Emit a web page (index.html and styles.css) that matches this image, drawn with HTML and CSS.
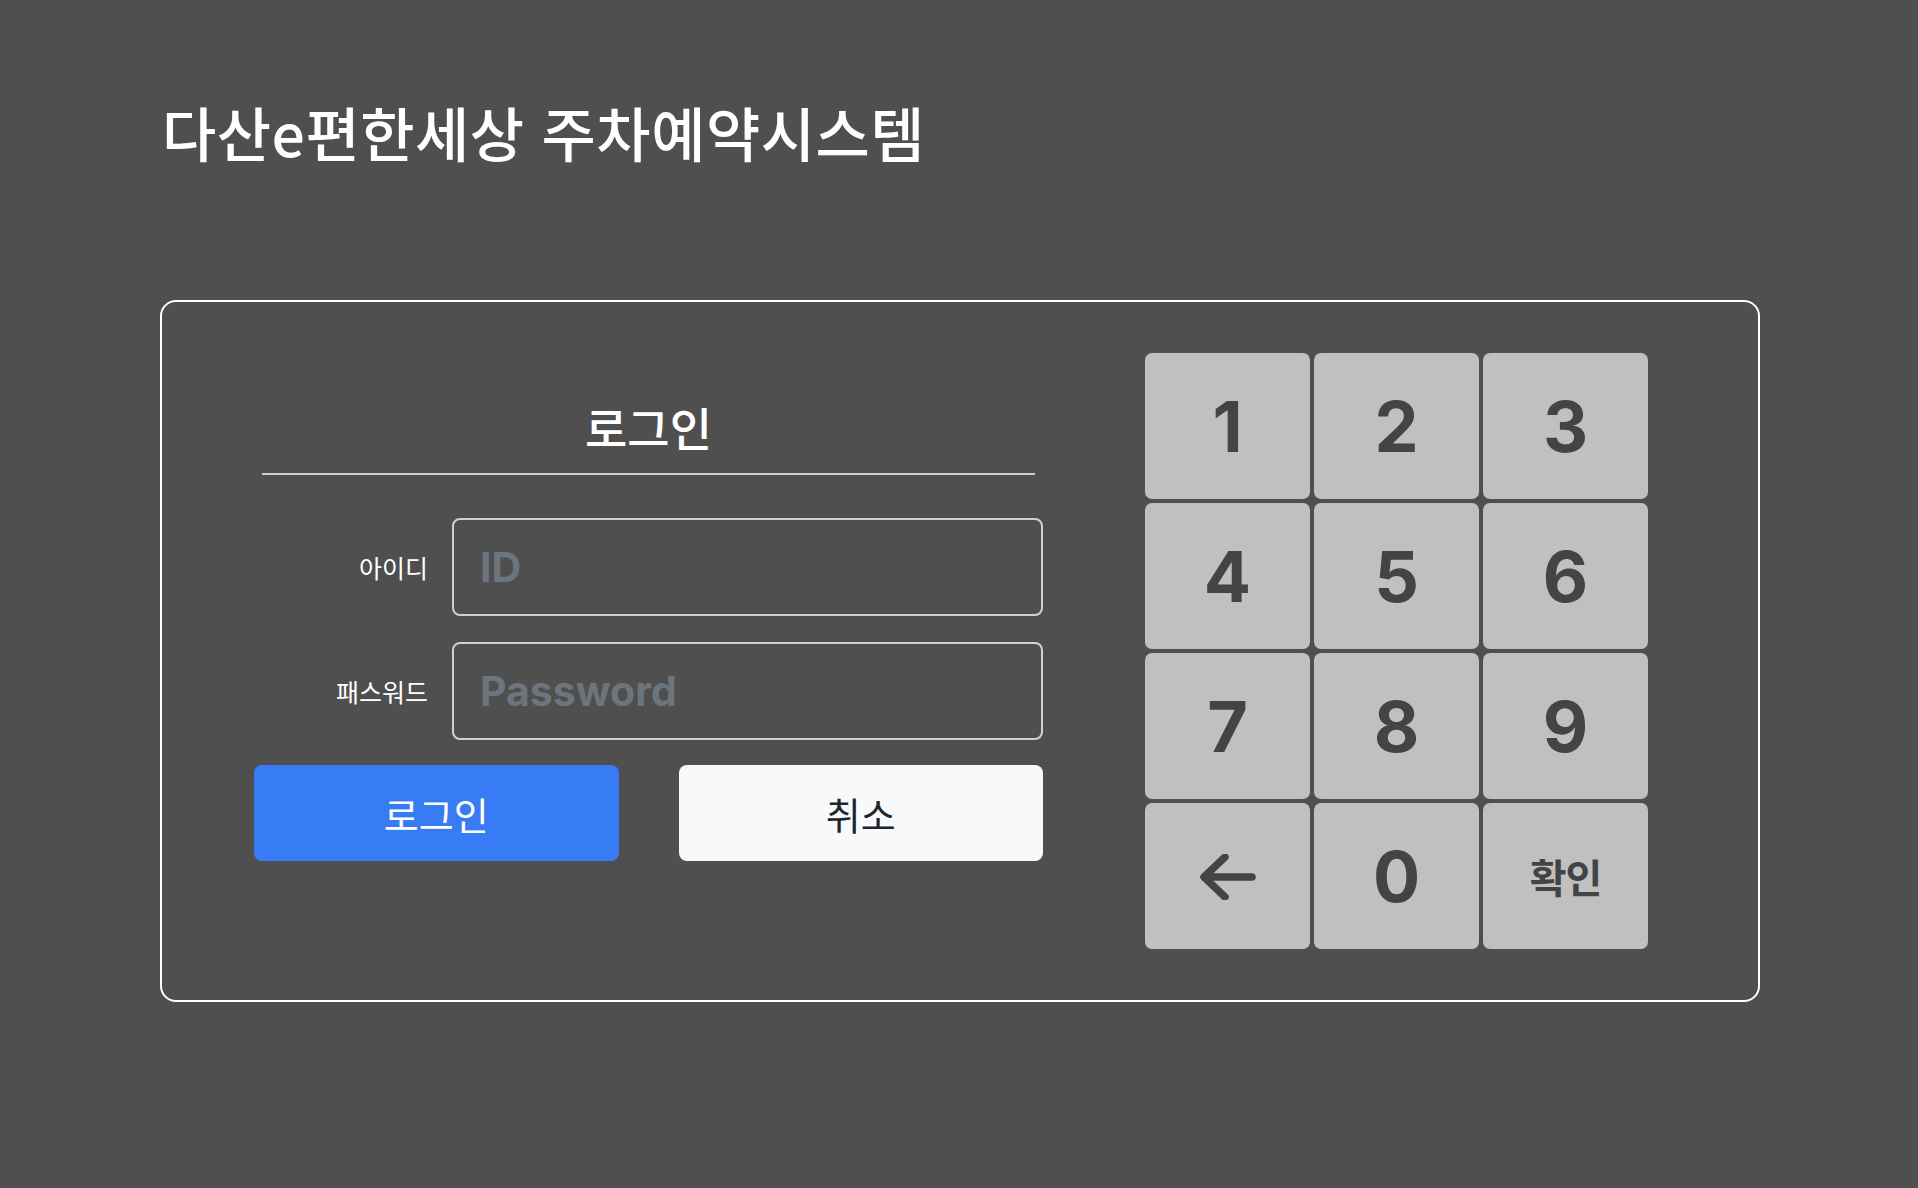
FILE: index.html
```html
<!DOCTYPE html>
<html lang="ko">
<head>
  <meta charset="UTF-8">
  <meta name="viewport" content="width=device-width, initial-scale=1.0">
  <title>다산e편한세상 주차예약시스템</title>
  <link rel="stylesheet" href="styles.css">
</head>
<body>
  <div class="page">
    <h1 class="site-title">다산e편한세상 주차예약시스템</h1>

    <div class="login-box">
      <div class="login-form">
        <h2 class="login-heading">로그인</h2>

        <div class="form-row">
          <label for="userId">아이디</label>
          <input id="userId" type="text" placeholder="ID">
        </div>
        <div class="form-row">
          <label for="userPw">패스워드</label>
          <input id="userPw" type="password" placeholder="Password">
        </div>

        <div class="button-row">
          <button class="btn-login">로그인</button>
          <button class="btn-cancel">취소</button>
        </div>
      </div>

      <div class="keypad">
        <button class="key">1</button>
        <button class="key">2</button>
        <button class="key">3</button>
        <button class="key">4</button>
        <button class="key">5</button>
        <button class="key">6</button>
        <button class="key">7</button>
        <button class="key">8</button>
        <button class="key">9</button>
        <button class="key key-back" aria-label="지우기">
          <svg width="56" height="46" viewBox="0 0 56 46" fill="none" stroke="#444" stroke-width="7.5" stroke-linecap="round" stroke-linejoin="round">
            <path d="M52 23H5"/>
            <path d="M25 3L4 23L25 43"/>
          </svg>
        </button>
        <button class="key">0</button>
        <button class="key key-ok">확인</button>
      </div>
    </div>
  </div>
</body>
</html>
```

FILE: styles.css
```css
body {
  margin: 0;
  background-color: #4f4f4f;
  color: #fff;
  font-family: "Noto Sans CJK KR", sans-serif;
}

.page {
  padding: 99px 0 0 160px;
}

.site-title {
  margin: 0 0 135px;
  padding-left: 2px;
  font-size: 59px;
  font-weight: 500;
  line-height: 66px;
  letter-spacing: 0.5px;
}

.login-box {
  box-sizing: border-box;
  width: 1600px;
  height: 702px;
  border: 2px solid #fff;
  border-radius: 16px;
  padding: 51px 110px 51px 92px;
  display: flex;
  align-items: flex-start;
  gap: 102px;
}

/* 왼쪽 로그인 폼 */
.login-form {
  width: 789px;
  padding-top: 46px;
}

.login-heading {
  margin: 0 8px 43px;
  padding-bottom: 20px;
  border-bottom: 2px solid #cfcfcf;
  text-align: center;
  font-size: 46px;
  font-weight: 500;
  line-height: 54px;
}

.form-row {
  display: flex;
  align-items: center;
  gap: 24px;
  margin-bottom: 26px;
}

.form-row label {
  flex: none;
  width: 174px;
  text-align: right;
  font-size: 25px;
  white-space: nowrap;
}

.form-row input {
  flex: 1;
  min-width: 0;
  box-sizing: border-box;
  height: 98px;
  padding: 0 26px;
  background: transparent;
  border: 2px solid #ced2d6;
  border-radius: 8px;
  color: #fff;
  font-family: Inter, sans-serif;
  font-size: 41px;
  font-weight: 700;
}

.form-row input::placeholder {
  color: #6c757d;
}

.button-row {
  display: grid;
  grid-template-columns: 1fr 1fr;
  gap: 60px;
  margin-top: -1px;
}

.button-row button {
  height: 96px;
  border: none;
  border-radius: 8px;
  font-family: "Noto Sans CJK KR", sans-serif;
  font-size: 38px;
  cursor: pointer;
}

.btn-login {
  background-color: #377bf5;
  color: #fff;
}

.btn-cancel {
  background-color: #f8f9fa;
  color: #212529;
}

/* 오른쪽 숫자 키패드 */
.keypad {
  display: grid;
  grid-template-columns: repeat(3, 165px);
  grid-auto-rows: 146px;
  gap: 4px;
}

.key {
  border: none;
  border-radius: 7px;
  background-color: #c0c0c0;
  color: #444;
  font-family: Inter, sans-serif;
  font-size: 70px;
  font-weight: 700;
  display: flex;
  align-items: center;
  justify-content: center;
  padding: 0;
  cursor: pointer;
}

.key-back svg {
  display: block;
  margin-top: 2px;
}

.key-ok {
  font-family: "Noto Sans CJK KR", sans-serif;
  font-size: 40px;
  letter-spacing: -1px;
}
```
